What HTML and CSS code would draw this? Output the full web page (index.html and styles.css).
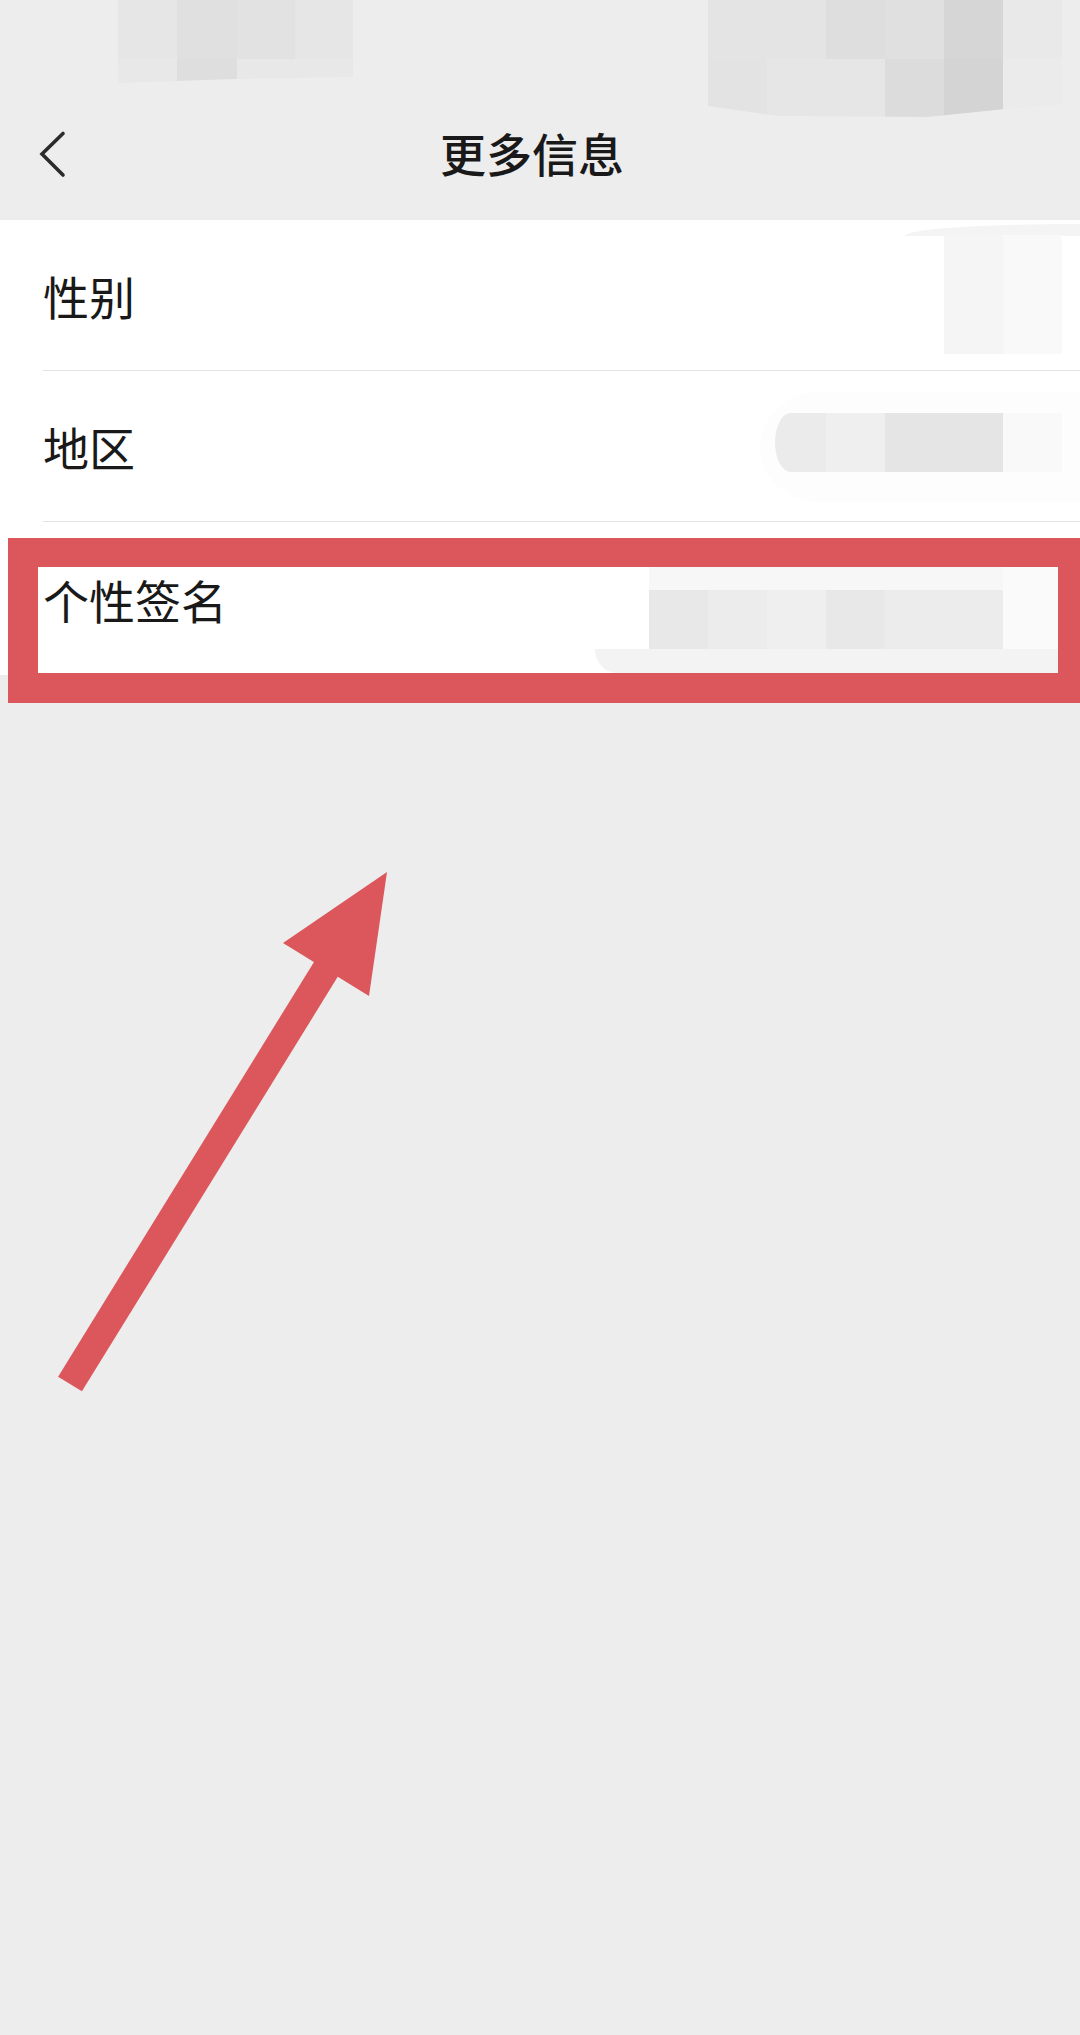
FILE: index.html
```html
<!DOCTYPE html>
<html lang="zh-CN">
<head>
<meta charset="utf-8">
<title>更多信息</title>
<link rel="stylesheet" href="styles.css">
</head>
<body>
<div class="page">
  <header class="top">
    <div class="status"></div>
    <div class="nav">
      <svg class="back" viewBox="0 0 32 48" width="32" height="48" aria-hidden="true">
        <polyline points="27,1.5 6,22 27,43" fill="none" stroke="#2b2b2b" stroke-width="3.6" stroke-linecap="round" stroke-linejoin="miter"/>
      </svg>
      <h1 class="title">更多信息</h1>
      <span class="spacer"></span>
    </div>

    <div class="mosaic mosaic-a">
      <i class="c-e6"></i><i class="c-e0"></i><i class="c-e2"></i><i class="c-e6"></i>
      <i class="c-e8"></i><i class="c-de"></i><i class="c-e8"></i><i class="c-e8"></i>
    </div>
    <div class="mosaic mosaic-b">
      <i class="c-e4"></i><i class="c-e4"></i><i class="c-de"></i><i class="c-e0"></i><i class="c-d6"></i><i class="c-e9"></i>
      <i class="c-e3"></i><i class="c-e6"></i><i class="c-e6"></i><i class="c-dc"></i><i class="c-d4"></i><i class="c-eb"></i>
    </div>
  </header>

  <ul class="list">
    <li class="row"><span class="label">性别</span></li>
    <li class="row"><span class="label">地区</span></li>
    <li class="row last"><span class="label">个性签名</span></li>

    <li class="veil veil-1"></li>
    <li class="mosaic mosaic-r1">
      <i class="c-f5"></i><i class="c-f9"></i>
      <i class="c-f5"></i><i class="c-f9"></i>
    </li>

    <li class="veil veil-2"></li>
    <li class="mosaic mosaic-r2">
      <i class="c-eb first"></i><i class="c-ef"></i><i class="c-e5"></i><i class="c-e5"></i><i class="c-f9"></i>
    </li>

    <li class="band band-bottom"></li>
    <li class="band band-top"></li>
    <li class="band band-side"></li>
    <li class="mosaic mosaic-r3">
      <i class="c-e8"></i><i class="c-ec"></i><i class="c-ef"></i><i class="c-e8"></i><i class="c-ec"></i><i class="c-ec"></i>
    </li>
  </ul>

  <div class="highlight"></div>

  <svg class="arrow" viewBox="0 840 420 580" width="420" height="580" aria-hidden="true">
    <line x1="70" y1="1384" x2="344" y2="940" stroke="#db575c" stroke-width="28" stroke-linecap="butt"/>
    <polygon points="387,872 283,943 369,996" fill="#db575c"/>
  </svg>
</div>
</body>
</html>
```

FILE: styles.css
```css
* {
  box-sizing: border-box;
}

html, body {
  margin: 0;
  padding: 0;
}

body {
  background: #ededed;
  width: 1080px;
  height: 2035px;
  overflow: hidden;
  font-family: "Noto Sans CJK SC", "Noto Sans", "Liberation Sans", sans-serif;
  color: #191919;
}

.page {
  position: relative;
  width: 1080px;
  height: 2035px;
}

/* ---------- header ---------- */
.top {
  position: relative;
  height: 220px;
  background: #ededed;
  display: flex;
  flex-direction: column;
}

.status {
  height: 92px;
}

.nav {
  height: 128px;
  display: grid;
  grid-template-columns: 1fr auto 1fr;
  align-items: center;
}

.back {
  display: block;
  margin-left: 36px;
  overflow: visible;
}

.title {
  margin: 0 16px 8px 0;
  font-size: 46px;
  font-weight: 500;
  line-height: 1;
  letter-spacing: 0;
  color: #191919;
}

/* ---------- mosaics (privacy blur overlays) ---------- */
.mosaic {
  position: absolute;
  display: grid;
  list-style: none;
  margin: 0;
  padding: 0;
}

.mosaic i {
  display: block;
}

.mosaic-a {
  left: 118px;
  top: 0;
  width: 235px;
  height: 83px;
  grid-template-columns: 59px 60px 58px 58px;
  grid-template-rows: 59px 24px;
  clip-path: polygon(0 0, 100% 0, 100% 77px, 50% 79px, 0 83px);
}

.mosaic-b {
  left: 708px;
  top: 0;
  width: 354px;
  height: 117px;
  grid-template-columns: repeat(6, 59px);
  grid-template-rows: 59px 58px;
  clip-path: polygon(0 0, 100% 0, 100% 105px, 84% 109px, 62% 117px, 20% 116px, 0 106px);
}

.c-d4 { background: #d4d4d4; }
.c-d6 { background: #d6d6d6; }
.c-dc { background: #dcdcdc; }
.c-de { background: #dedede; }
.c-e0 { background: #e0e0e0; }
.c-e2 { background: #e2e2e2; }
.c-e3 { background: #e3e3e3; }
.c-e4 { background: #e4e4e4; }
.c-e5 { background: #e5e5e5; }
.c-e6 { background: #e6e6e6; }
.c-e8 { background: #e8e8e8; }
.c-e9 { background: #e9e9e9; }
.c-eb { background: #ebebeb; }
.c-ec { background: #ececec; }
.c-ef { background: #efefef; }
.c-f5 { background: #f5f5f5; }
.c-f9 { background: #f9f9f9; }

/* ---------- list ---------- */
.list {
  position: relative;
  list-style: none;
  margin: 0;
  padding: 0;
  background: #ffffff;
}

.row {
  height: 151px;
  margin-left: 43px;
  border-bottom: 1px solid #e3e3e3;
  display: flex;
  align-items: center;
}

.row.last {
  height: 153px;
  border-bottom: none;
}

.label {
  font-size: 46px;
  line-height: 1;
  color: #191919;
}

.veil {
  position: absolute;
}

.veil-1 {
  left: 905px;
  top: 4px;
  width: 175px;
  height: 12px;
  background: #f4f4f4;
  border-top-left-radius: 170px 12px;
}

.veil-2 {
  left: 760px;
  top: 172px;
  width: 320px;
  height: 110px;
  background: #fdfdfd;
  border-radius: 60px 0 0 60px / 55px 0 0 55px;
}

.mosaic-r1 {
  left: 944px;
  top: 15px;
  width: 118px;
  height: 119px;
  grid-template-columns: 59px 59px;
  grid-template-rows: 60px 59px;
}

.mosaic-r2 {
  left: 775px;
  top: 193px;
  height: 59px;
  grid-template-columns: 51px 59px 59px 59px 59px;
  grid-template-rows: 59px;
}

.mosaic-r2 .first {
  border-radius: 16px 0 0 16px / 30px 0 0 30px;
}

.band {
  position: absolute;
}

.band-top {
  left: 649px;
  top: 347px;
  width: 354px;
  height: 23px;
  background: #f7f7f7;
}

.band-side {
  left: 1003px;
  top: 347px;
  width: 77px;
  height: 82px;
  background: #fafafa;
}

.band-bottom {
  left: 595px;
  top: 429px;
  width: 485px;
  height: 24px;
  background: #f3f3f3;
  border-bottom-left-radius: 22px 24px;
}

.mosaic-r3 {
  left: 649px;
  top: 370px;
  height: 59px;
  grid-template-columns: repeat(6, 59px);
  grid-template-rows: 59px;
}

/* ---------- annotations ---------- */
.highlight {
  position: absolute;
  left: 8px;
  right: 0;
  top: 538px;
  height: 165px;
  border-style: solid;
  border-color: #db575c;
  border-width: 29px 22px 30px 30px;
}

.arrow {
  position: absolute;
  left: 0;
  top: 840px;
  display: block;
}
```
